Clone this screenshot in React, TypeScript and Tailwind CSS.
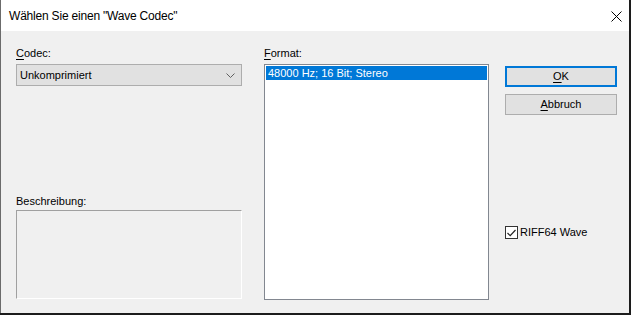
export default function App() {
  return (
    <div className="w-[631px] h-[315px] bg-[#1c1c1c] overflow-hidden">
      <div className="w-[629px] h-[313px] bg-[#f0f0f0] border-l border-[#6b6b6b] flex flex-col font-['Liberation_Sans',Arial,sans-serif] text-[11px] text-black">
        {/* Title bar */}
        <div className="h-[31px] bg-white flex items-center justify-between shrink-0">
          <span className="pl-[8px] text-[12px] tracking-[-0.2px] leading-[16px] pt-[1px]">Wählen Sie einen "Wave Codec"</span>
          <svg width="11" height="11" viewBox="0 0 11 11" className="mr-[7px] mt-[1px]">
            <path d="M0.5 0.5 L10.5 10.5 M10.5 0.5 L0.5 10.5" stroke="#000" strokeWidth="1" />
          </svg>
        </div>

        {/* Content */}
        <div className="flex pt-[16px] pl-[15px]">
          {/* Left column */}
          <div className="w-[226px] flex flex-col">
            <div className="h-[13px] leading-[13px]"><span className="underline underline-offset-2">C</span>odec:</div>
            <div className="mt-[4px] h-[22px] bg-[#e1e1e1] border border-[#adadad] flex items-center justify-between pl-[3px] pr-[6px]">
              <span>Unkomprimiert</span>
              <svg width="9" height="5" viewBox="0 0 9 5">
                <path d="M0.5 0.5 L4.5 4.5 L8.5 0.5" stroke="#606060" fill="none" strokeWidth="1" />
              </svg>
            </div>
            <div className="mt-[109px] h-[13px] leading-[13px]">Beschreibung:</div>
            <div className="mt-[2px] h-[89px] border-t border-l border-[#a0a0a0] border-r border-b border-r-white border-b-white" />
          </div>

          {/* Middle column */}
          <div className="ml-[22px] w-[225px] flex flex-col">
            <div className="h-[13px] leading-[13px]"><span className="underline underline-offset-2">F</span>ormat:</div>
            <div className="mt-[4px] h-[236px] bg-white border border-[#828790] p-[1px]">
              <div className="h-[14px] bg-[#0078d7] text-white leading-[14px] pl-[2px]">48000 Hz; 16 Bit; Stereo</div>
            </div>
          </div>

          {/* Right column */}
          <div className="ml-[16px] w-[112px] flex flex-col">
            <button className="mt-[19px] h-[21px] bg-[#e1e1e1] border-2 border-[#0078d7] leading-[17px]">
              <span className="underline underline-offset-2">O</span>K
            </button>
            <button className="mt-[7px] h-[21px] bg-[#e1e1e1] border border-[#adadad] leading-[19px]">
              <span className="underline underline-offset-2">A</span>bbruch
            </button>
            <div className="mt-[111px] flex items-center gap-[2px]">
              <div className="w-[13px] h-[13px] bg-white border border-[#333333] flex items-center justify-center">
                <svg width="9" height="8" viewBox="0 0 9 8">
                  <path d="M0.5 4 L3.2 6.7 L8.5 1" stroke="#222" fill="none" strokeWidth="1.2" />
                </svg>
              </div>
              <span className="leading-[13px]">RIFF64 Wave</span>
            </div>
          </div>
        </div>
      </div>
    </div>
  );
}
